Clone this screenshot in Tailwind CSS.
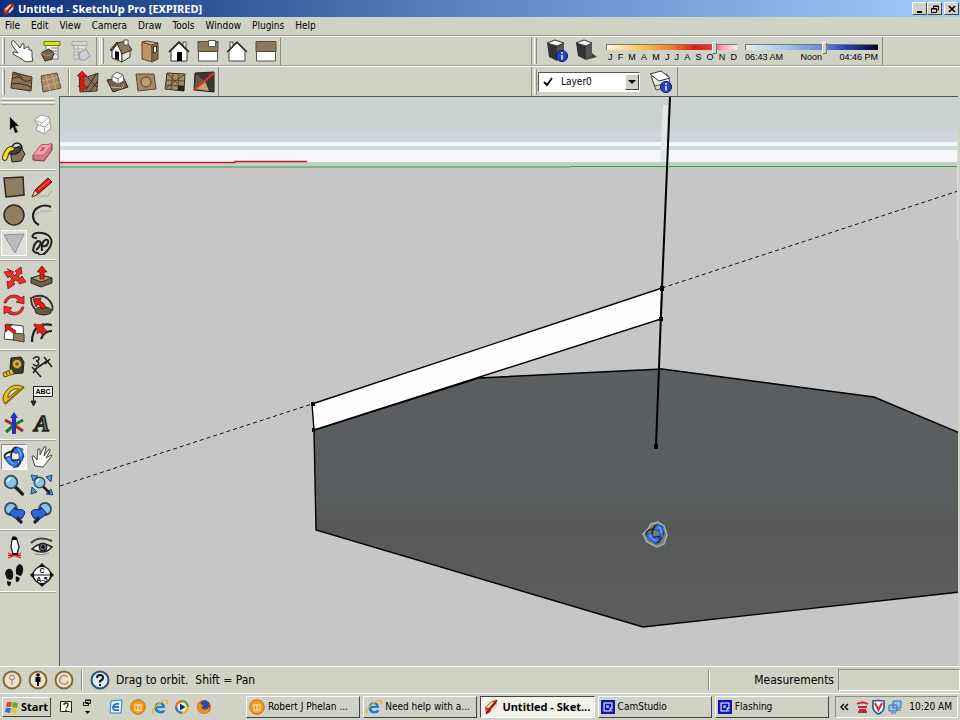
<!DOCTYPE html>
<html lang="en">
<head>
    <meta charset="UTF-8">
    <meta name="viewport" content="width=device-width, initial-scale=1.0">
    <script src="https://cdn.jsdelivr.net/npm/@tailwindcss/browser@4"></script>
    <title>Untitled - SketchUp Pro [EXPIRED]</title>
</head>
<body class="flex h-screen flex-col overflow-hidden bg-[#d1d2c6] text-[10px] leading-4 text-black font-['DejaVu_Sans_Condensed','DejaVu_Sans',sans-serif]">
    <!-- shared icons -->
    <svg class="hidden" aria-hidden="true">
        <symbol id="sketchup" viewBox="0 0 16 16">
            <path d="M2 8 9 2l5-1-1 7-7 6-3 1z" fill="#c8452c"/>
            <path d="M3 8 9 3l2 0-5 6zM8 10l5-5 0 3-5 5z" fill="#f7d9c8"/>
            <path d="M3 15 14 1" stroke="#6b2015" stroke-width="1.3"/>
        </symbol>
        <symbol id="ie" viewBox="0 0 16 16">
            <path d="M13 9H5.500q.4 3 3 3 1.600 0 2.400-1.300L13.500 12Q11.800 14.500 8.300 14.500 2.500 14 2.500 8.500 3 3.200 8.200 3q5 .4 4.800 6zM5.600 7H10q-.3-2-2.100-2T5.600 7z" fill="#1c7fd6"/>
            <path d="M1 14.500Q-.5 11 6 5.500 13-.2 15 1.500q1 1.200-.6 4" fill="none" stroke="#e8b21c" stroke-width="1.400"/>
        </symbol>
        <symbol id="orange" viewBox="0 0 16 16">
            <circle cx="8" cy="8" r="7.300" fill="#f39a1e" stroke="#c96f0c"/>
            <path d="M4 6h8M5 6v5M8 6v5M11 6v5M4.500 11.500h7" stroke="#fbd9a0" stroke-width="1.400" fill="none"/>
        </symbol>
        <symbol id="cam" viewBox="0 0 16 16">
            <rect width="16" height="16" fill="#1414b4"/>
            <path d="M3.500 3.500h9v6h-2v3h-7z" fill="none" stroke="#fff" stroke-width="1.200"/>
            <path d="M6 6h3v3H6zM11 11h2v2h-2z" fill="#9fb4ff"/>
        </symbol>
        <symbol id="orbit" viewBox="0 0 24 24">
            <ellipse cx="12" cy="11" rx="9.500" ry="4.500" fill="none" stroke="#222" stroke-width="1.800"/>
            <ellipse cx="14" cy="12" rx="5" ry="9.500" fill="none" stroke="#222" stroke-width="1.800"/>
            <path d="m11 6 4-4 6 2-1 2q3 5 0 10l-3-1q1-5-1-8l-2 2z" fill="#2f78e0" stroke="#123c8c" stroke-width=".7"/>
            <path d="m2 13 6-2 3 4-2 0q2 2 4 1l1-2 3 5-5 4-1-2q-5-1-7-6z" fill="#2f78e0" stroke="#123c8c" stroke-width=".7"/>
            <path d="M16 4q3 2 3 7M6 13q2 4 6 6" fill="none" stroke="#9cc4f8"/>
        </symbol>
        <symbol id="info" viewBox="0 0 12 12">
            <circle cx="6" cy="6" r="5.600" fill="#2743c0" stroke="#0d1c70"/>
            <path d="M6 5v4.500M6 2v1.700" stroke="#fff" stroke-width="1.500"/>
        </symbol>
        <symbol id="lens" viewBox="0 0 24 24">
            <path d="m13.500 14 7 7" stroke="#222" stroke-width="3.200" stroke-linecap="round"/>
            <circle cx="9" cy="9" r="6.300" fill="#8fc3e6" stroke="#31505f" stroke-width="1.800"/>
            <path d="M5.500 9Q6 5.500 9 5.200" stroke="#e4f4fd" stroke-width="1.600" fill="none"/>
        </symbol>
    </svg>

    <!-- title bar -->
    <header class="flex h-[17px] shrink-0 items-center gap-0.5 bg-linear-to-r from-[#0f2f78] via-[#5f86c4] to-[#a3cdfb] pr-px pl-0.5">
        <svg class="size-[14px]"><use href="#sketchup"/></svg>
        <h1 class="flex-1 text-[11px] font-bold text-white font-['Noto_Sans',sans-serif]">Untitled - SketchUp Pro [EXPIRED]</h1>
        <div class="flex text-black">
            <button aria-label="Minimize" class="grid h-[13px] w-[15px] place-items-center border border-t-white border-r-[#444] border-b-[#444] border-l-white bg-[#d1d2c6]"><svg class="h-2 w-2" viewBox="0 0 8 8"><path d="M1 6h5v2H1z"/></svg></button>
            <button aria-label="Restore" class="grid h-[13px] w-[15px] place-items-center border border-t-white border-r-[#444] border-b-[#444] border-l-white bg-[#d1d2c6]"><svg class="h-2 w-2" viewBox="0 0 8 8"><path d="M2.500 3V1h5v4H6M.5 3.500h5v4h-5zM.5 4h5M2.500 1.500h5" fill="none" stroke="#000"/></svg></button>
            <button aria-label="Close" class="ml-0.5 grid h-[13px] w-[15px] place-items-center border border-t-white border-r-[#444] border-b-[#444] border-l-white bg-[#d1d2c6]"><svg class="h-2 w-2" viewBox="0 0 8 8"><path d="m1 1 6 6M7 1 1 7" stroke="#000" stroke-width="1.600"/></svg></button>
        </div>
    </header>

    <!-- menu -->
    <nav class="flex h-[19px] shrink-0 items-center gap-[11px] border-b border-[#9c9c92] pl-[5px]">
        <a href="#">File</a>
        <a href="#">Edit</a>
        <a href="#">View</a>
        <a href="#">Camera</a>
        <a href="#">Draw</a>
        <a href="#">Tools</a>
        <a href="#">Window</a>
        <a href="#">Plugins</a>
        <a href="#">Help</a>
    </nav>

    <!-- toolbars, first row -->
    <div class="flex h-[30px] shrink-0 border-t border-b border-t-white border-b-[#a2a298]">
        <div class="flex flex-1">
            <div class="flex items-center border-r border-[#8d8d84] pl-0.5">
                <i class="mr-0.5 h-[26px] w-[3px] border-r border-l border-l-white border-r-[#8d8d84]"></i>
                <button aria-label="Interact" class="grid w-[29px] place-items-center"><svg class="size-6" viewBox="0 0 24 24"><path d="M2 2q2-1 3 1l5 6 2-4q2-2 2 1l0 4 3-2q2-1 2 1l0 2q3-1 3 2l0 5 1 4-7 1-6-4-7-4q-1-2 2-2l3 1L4 9l-2-3q-1-3 0-4z" fill="#fff" stroke="#444"/></svg></button>
                <button aria-label="Component options" class="grid w-[29px] place-items-center"><svg class="size-6" viewBox="0 0 24 24"><path d="M7 5h12v15H7z" fill="#f4f4ee" stroke="#777"/><path d="M5 2.500h16v4H5z" fill="#d9e021" stroke="#777618"/><path d="M12 9h6M12 12h6M12 15h6" stroke="#777"/><path d="m2 14 8-4 5 4-2 6-7 2z" fill="#75624a" stroke="#30261b"/><path d="m2 14 6 3 7-3" fill="none" stroke="#b39b79"/></svg></button>
                <button aria-label="Component attributes" disabled class="grid w-[29px] place-items-center"><svg class="size-6" viewBox="0 0 24 24"><path d="M6 5h12v15H6z" fill="#e0e0da" stroke="#aaa"/><path d="M4 2.500h15v4H4z" fill="#d5d5cf" stroke="#aaa"/><path d="M6 10h10M6 13h10M6 16h10M10 7v13" stroke="#aaa"/><path d="m11 14 7-4 4 7-5 4h-5z" fill="#cccfd4" stroke="#999"/></svg></button>
                <i class="ml-0.5 h-[28px] w-1 border-r border-l border-l-[#8d8d84] border-r-white"></i>
                <i class="mr-0.5 ml-px h-[26px] w-[3px] border-r border-l border-l-white border-r-[#8d8d84]"></i>
                <button aria-label="Iso" class="grid w-[29px] place-items-center"><svg class="size-6" viewBox="0 0 24 24"><path d="m3 10 5-6 5 10v9l-10-4z" fill="#fff" stroke="#333"/><path d="m13 14 8-3v7l-8 5z" fill="#e4e4df" stroke="#333"/><path d="m8 4 9-2 6 9-10 4z" fill="#8a795d" stroke="#333"/><path d="m1 11 7-8 1 1-6 8z" fill="#5a4e3a" stroke="#333"/><path d="M15 1h4v5h-4z" fill="#fff" stroke="#555"/><path d="m6 12 4 1v8l-4-1z"/></svg></button>
                <button aria-label="Top" class="grid w-[29px] place-items-center"><svg class="size-6" viewBox="0 0 24 24"><path d="m4 3 10 3v17L4 20z" fill="#bc9365" stroke="#5d4529"/><path d="m4 3 5-1 11 2-6 2z" fill="#d8b88d" stroke="#5d4529"/><path d="M14 6l6-2v16l-6 3z" fill="#8a6c47" stroke="#5d4529"/><path d="m15.500 8 3-1v6l-3 1z" fill="#fff" stroke="#333"/></svg></button>
                <button aria-label="Front" class="grid w-[29px] place-items-center"><svg class="size-6" viewBox="0 0 24 24"><path d="M16 3h3v6h-3z" fill="#fff" stroke="#444"/><path d="M4 12 12 4l8 8v10H4z" fill="#fff" stroke="#333"/><path d="m2 13 10-10 10 10" fill="none" stroke="#3c352a" stroke-width="1.800"/><path d="M10 13h5v9h-5z"/></svg></button>
                <button aria-label="Right" class="grid w-[29px] place-items-center"><svg class="size-6" viewBox="0 0 24 24"><path d="M2.500 12h19v10h-19z" fill="#fff" stroke="#555"/><path d="M2 2.500h20v10H2z" fill="#8a795d" stroke="#5a4e3a"/><path d="M12.500 1.500h7v6h-7z" fill="#fff" stroke="#555"/></svg></button>
                <button aria-label="Back" class="grid w-[29px] place-items-center"><svg class="size-6" viewBox="0 0 24 24"><path d="M5 3h3v6H5z" fill="#fff" stroke="#444"/><path d="M4 12 12 4l8 8v10H4z" fill="#fff" stroke="#444"/><path d="m2 13 10-10 10 10" fill="none" stroke="#3c352a" stroke-width="1.500"/></svg></button>
                <button aria-label="Left" class="grid w-[29px] place-items-center"><svg class="size-6" viewBox="0 0 24 24"><path d="M2.500 12h19v10h-19z" fill="#fff" stroke="#555"/><path d="M2 2.500h20v10H2z" fill="#8a795d" stroke="#5a4e3a"/></svg></button>
            </div>
        </div>
        <div class="w-[429px]">
            <div class="flex h-full w-[352px] items-center border-r border-l border-r-[#8d8d84] border-l-[#8d8d84]">
                <i class="mr-[5px] ml-0.5 h-[26px] w-[3px] border-r border-l border-l-white border-r-[#8d8d84]"></i>
                <button aria-label="Shadow settings" class="grid w-[29px] place-items-center"><svg class="size-6" viewBox="0 0 24 24"><path d="m2 4 10 3v15L4 18z" fill="#333"/><path d="m12 7 7-3v14l-7 4z" fill="#555"/><path d="m2 4 8-3 9 3-7 3z" fill="#f6f6f6" stroke="#333"/><use href="#info" x="11" y="11" width="12" height="12"/></svg></button>
                <button aria-label="Display shadows" class="grid w-[29px] place-items-center"><svg class="size-6" viewBox="0 0 24 24"><path d="m12 21 11-3-5-4z" fill="#444"/><path d="m2 4 10 3v14L4 17z" fill="#333"/><path d="m12 7 6-3v13l-6 4z" fill="#555"/><path d="m2 4 8-3 8 3-6 3z" fill="#f6f6f6" stroke="#333"/></svg></button>
                <div class="ml-1.5 flex w-[131px] flex-col text-[9px] leading-[9px] font-['Liberation_Sans',sans-serif]">
                    <input type="range" aria-label="Month" min="0" max="100" value="84" class="h-3 w-full appearance-none border-y-3 border-transparent bg-[linear-gradient(to_right,#fff8e8,#f5c648_28%,#ef7a2c_50%,#dc1c18_68%,#e8343a_80%,#f7aeb8_90%,#fbe6ea)] bg-clip-padding shadow-[inset_1px_1px_0_#777] [&::-webkit-slider-thumb]:h-3 [&::-webkit-slider-thumb]:w-[5px] [&::-webkit-slider-thumb]:translate-y-px [&::-webkit-slider-thumb]:appearance-none [&::-webkit-slider-thumb]:border [&::-webkit-slider-thumb]:border-[#777] [&::-webkit-slider-thumb]:border-t-white [&::-webkit-slider-thumb]:border-l-white [&::-webkit-slider-thumb]:bg-[#d1d2c6]">
                    <div class="flex justify-between pl-0.5"><span>J</span><span>F</span><span>M</span><span>A</span><span>M</span><span>J</span><span>J</span><span>A</span><span>S</span><span>O</span><span>N</span><span>D</span></div>
                </div>
                <div class="ml-2 flex w-[133px] flex-col text-[9px] leading-[9px] font-['Liberation_Sans',sans-serif]">
                    <input type="range" aria-label="Time" min="0" max="100" value="60" class="h-3 w-full appearance-none border-y-3 border-transparent bg-[linear-gradient(to_right,#e4f2f4,#a8c4e4_30%,#5c84d8_60%,#2c44b8_75%,#080818)] bg-clip-padding shadow-[inset_1px_1px_0_#777] [&::-webkit-slider-thumb]:h-3 [&::-webkit-slider-thumb]:w-[5px] [&::-webkit-slider-thumb]:translate-y-px [&::-webkit-slider-thumb]:appearance-none [&::-webkit-slider-thumb]:border [&::-webkit-slider-thumb]:border-[#777] [&::-webkit-slider-thumb]:border-t-white [&::-webkit-slider-thumb]:border-l-white [&::-webkit-slider-thumb]:bg-[#d1d2c6]">
                    <div class="flex justify-between"><span>06:43 AM</span><span>Noon</span><span>04:46 PM</span></div>
                </div>
            </div>
        </div>
    </div>

    <!-- toolbars, second row -->
    <div class="flex h-[30px] shrink-0 border-t border-t-white">
        <div class="flex flex-1">
            <div class="flex items-center border-r border-[#8d8d84] pl-0.5">
                <i class="mr-0.5 h-[26px] w-[3px] border-r border-l border-l-white border-r-[#8d8d84]"></i>
                <button aria-label="From contours" class="grid w-[29px] place-items-center"><svg class="size-6" viewBox="0 0 24 24"><path d="m3 2 7 2 12 3-1 14-20-3z" fill="#8a7458" stroke="#3d3020"/><path d="M2 9q6-4 10 0t9 1M2 14q8-2 19 3M4 4q8 1 8 5" fill="none" stroke="#3a2d1f"/></svg></button>
                <button aria-label="From scratch" class="grid w-[29px] place-items-center"><svg class="size-6" viewBox="0 0 24 24"><path d="m2 6 16-3 4 15-18 4z" fill="#a18a65" stroke="#5e4c33"/><path d="m7 5 4 16M13 4l4 15M3 11l16-4M4 17l17-5" stroke="#c7b08a" fill="none"/></svg></button>
                <i class="mx-[3px] h-[26px] w-0.5 border-l border-r border-l-[#8d8d84] border-r-white"></i>
                <button aria-label="Smoove" class="grid w-[29px] place-items-center"><svg class="size-6" viewBox="0 0 24 24"><path d="m3 4 8 3 11-4-1 18-17 1z" fill="#8a7458" stroke="#3d3020"/><path d="M10 20 20 4M14 21l7-9M12 8l9 9" stroke="#30261b"/><path d="m6 1 5 5H8v10h3l-4 5-5-5h2V6H1z" fill="#e01818" stroke="#8c0808" stroke-width=".6"/></svg></button>
                <button aria-label="Stamp" class="grid w-[29px] place-items-center"><svg class="size-6" viewBox="0 0 24 24"><path d="m2 10 16-3 5 10-15 5z" fill="#74614a" stroke="#30261b"/><path d="m6 17 11 1 2-4" fill="none" stroke="#cbb58f"/><path d="m7 6 5-4 6 3 1 6-6 3-6-3z" fill="#fff" stroke="#555"/><path d="m7 6 6 3 5-4M13 9v5" fill="none" stroke="#777"/></svg></button>
                <button aria-label="Drape" class="grid w-[29px] place-items-center"><svg class="size-6" viewBox="0 0 24 24"><path d="m2 4 18 0 2 15-18 2z" fill="#a18a65" stroke="#5e4c33"/><circle cx="12" cy="12" r="5" fill="#b59e76" stroke="#55442e"/></svg></button>
                <button aria-label="Add detail" class="grid w-[29px] place-items-center"><svg class="size-6" viewBox="0 0 24 24"><path d="m4 3 18 1-1 17-19-2z" fill="#a18a65" stroke="#3d3020"/><path d="m10 4-2 15M16 4l-1 16M3 10l18 1M3 15l18 1M4 3l17 17M22 4 3 18" stroke="#5a4832"/><path d="M15 16h6v5h-6z" fill="#222"/></svg></button>
                <button aria-label="Flip edge" class="grid w-[29px] place-items-center"><svg class="size-6" viewBox="0 0 24 24"><path d="m3 3 19-1 0 20-20-2z" fill="#3c3733" stroke="#222"/><path d="m4 4 9 8-10 8z" fill="#6c5848"/><path d="m13 11 4 10-14-2z" fill="#c3a478"/><path d="M2 20 22 3" stroke="#e03020" stroke-width="2"/></svg></button>
            </div>
        </div>
        <div class="w-[429px]">
            <div class="flex h-full w-[147px] items-center border-r border-l border-r-[#8d8d84] border-l-[#8d8d84]">
                <i class="mr-px ml-0.5 h-[26px] w-[3px] border-r border-l border-l-white border-r-[#8d8d84]"></i>
                <div class="relative h-5 w-[102px] border border-t-[#555] border-r-white border-b-white border-l-[#555] bg-white">
                    <select aria-label="Layer" class="h-full w-full appearance-none pl-[22px] text-[10px] leading-4"><option>Layer0</option></select>
                    <svg class="pointer-events-none absolute top-1 left-1 size-[10px]" viewBox="0 0 10 10"><path d="m1 5 3 3 5-7" fill="none" stroke="#000" stroke-width="1.800"/></svg>
                    <span class="pointer-events-none absolute top-px right-0 grid h-4 w-[14px] place-items-center border border-t-white border-r-[#444] border-b-[#444] border-l-white bg-[#d1d2c6]"><svg class="h-1 w-2" viewBox="0 0 8 4"><path d="M0 0h8L4 4z"/></svg></span>
                </div>
                <button aria-label="Layer manager" class="ml-1.5 grid w-[29px] place-items-center"><svg class="size-6" viewBox="0 0 24 24"><path d="m3 9 4 11 14-3-3-10z" fill="#d9d9d0" stroke="#555"/><path d="m2 6 4 10 15-4-3-8z" fill="#ecece6" stroke="#555"/><path d="m1 4 11-3 9 7-11 3z" fill="#fff" stroke="#333"/><use href="#info" x="11" y="11" width="12" height="12"/></svg></button>
            </div>
        </div>
    </div>

    <main class="flex min-h-0 flex-1 pr-0.5">
        <!-- large tool set -->
        <aside class="w-[59px] shrink-0 pt-0.5 pr-[3px]">
            <div class="flex h-[11px] flex-col gap-px px-px">
                <i class="h-[3px] border-t border-b border-t-white border-b-[#a2a298]"></i>
                <i class="h-[3px] border-t border-b border-t-white border-b-[#a2a298]"></i>
            </div>
            <div class="grid auto-rows-[28px] grid-cols-2 place-items-center border-b border-white py-0.5">
                <button aria-label="Select"><svg class="size-6" viewBox="0 0 24 24"><path d="m8 4 9 9-4 0 3 6-3 1-2-6-3 3z" fill="#000" stroke="#777" stroke-width=".6"/></svg></button>
                <button aria-label="Make component"><svg class="size-6" viewBox="0 0 24 24"><path d="m4 7 7-5 8 2 2 11-7 6-8-4 2-6z" fill="#f8f8f6" stroke="#999"/><path d="m4 7 8 3 7-6M12 10l-3 3M8 12l7 2 5-5M15 14l-1 7" fill="none" stroke="#aaa"/></svg></button>
                <button aria-label="Paint bucket"><svg class="size-6" viewBox="0 0 24 24"><ellipse cx="15" cy="7" rx="5" ry="5" fill="none" stroke="#222" stroke-width="1.500"/><path d="M8 9 18 5l5 8-4 7-9 1z" fill="#83765d" stroke="#222"/><ellipse cx="13" cy="10" rx="6" ry="3" transform="rotate(-20 13 10)" fill="#444" stroke="#111"/><path d="M13 7Q7 3 3 10T1 19q4 2 5-4t5-5z" fill="#f2dc20" stroke="#222"/></svg></button>
                <button aria-label="Eraser"><svg class="size-6" viewBox="0 0 24 24"><path d="m3 14 8-10 11-1 0 6-8 11-11-1z" fill="#d9758b" stroke="#8d3347"/><path d="m3 14 8-10 11-1-8 11z" fill="#f3a3b2" stroke="#b75468" stroke-width=".6"/><path d="m10 10 4-2M11 7l4 0" stroke="#a03048"/></svg></button>
            </div>
            <div class="grid auto-rows-[28px] grid-cols-2 place-items-center border-t border-b border-t-[#a2a298] border-b-white py-0.5">
                <button aria-label="Rectangle"><svg class="size-6" viewBox="0 0 24 24"><path d="m2 3 19-1 1 18-18 2z" fill="#8f7f62" stroke="#2d2820" stroke-width="1.500"/></svg></button>
                <button aria-label="Line"><svg class="size-6" viewBox="0 0 24 24"><path d="M5 21h13l4-6" fill="none" stroke="#aaa"/><path d="m2 22 3-7 13-12 4 4L8 19z" fill="#d41c1c" stroke="#5e0c0c"/><path d="m2 22 3-7 3 4z" fill="#e9d0a0" stroke="#333" stroke-width=".7"/><path d="m8 15 12-10" stroke="#ff7a6a"/></svg></button>
                <button aria-label="Circle"><svg class="size-6" viewBox="0 0 24 24"><circle cx="12" cy="12" r="10" fill="#8f7f62" stroke="#2d2820" stroke-width="1.500"/></svg></button>
                <button aria-label="Arc"><svg class="size-6" viewBox="0 0 24 24"><path d="M21 4Q15 1 9 4T3 13t6 9" fill="none" stroke="#222" stroke-width="2.200"/><path d="m5 12 7-4 10 0" fill="none" stroke="#aaa"/></svg></button>
                <button aria-label="Polygon" class="border border-white bg-[#dedfd8]"><svg class="size-6" viewBox="0 0 24 24"><path d="m2 4 20-1-9 19z" fill="#b9bbbd" stroke="#8d8f91"/></svg></button>
                <button aria-label="Freehand"><svg class="size-6" viewBox="0 0 24 24"><path d="M7 7Q1 7 3 4T12 2t9 6-4 12-9 2q-4 0-5-3 1-7 5-9 4 0 2 4t-4 5M12 20q-1-8 3-11 4-1 3 3t-6 3" fill="none" stroke="#222" stroke-width="2"/></svg></button>
            </div>
            <div class="grid auto-rows-[28px] grid-cols-2 place-items-center border-t border-b border-t-[#a2a298] border-b-white py-0.5">
                <button aria-label="Move"><svg class="size-6" viewBox="0 0 24 24"><path d="m4 3 7 3-2 1 3 3 2-4-2-1 6-4 1 7-2-1-2 4 3 1 1-2 4 6-7 2 0-2-4-2-2 3 2 1-7 5-1-8 2 1 3-3-3-3-1 2-4-6 7-1z" transform="translate(1 1)" fill="#e83030" stroke="#8c1010" stroke-width=".8"/></svg></button>
                <button aria-label="Push/Pull"><svg class="size-6" viewBox="0 0 24 24"><path d="m1 13 10-3 11 3v5l-11 4-10-4z" fill="#6f6149" stroke="#332b1d"/><path d="m1 13 10-3 11 3-11 4z" fill="#ab9a77" stroke="#332b1d"/><path d="m12 1 5 6h-3v7h-4V7H7z" fill="#e01c1c" stroke="#7c0c0c" stroke-width=".8"/></svg></button>
                <button aria-label="Rotate"><svg class="size-6" viewBox="0 0 24 24"><path d="M2 10Q4 2 12 2q5 0 7 3l3-2 0 8-8-2 3-2q-4-4-9-2-3 2-4 5z" fill="#e83030" stroke="#8c1010" stroke-width=".8"/><path d="M22 14q-2 8-10 8-5 0-7-3l-3 2 0-8 8 2-3 2q4 4 9 2 3-2 4-5z" fill="#e83030" stroke="#8c1010" stroke-width=".8"/></svg></button>
                <button aria-label="Follow me"><svg class="size-6" viewBox="0 0 24 24"><path d="M5 16Q1 12 1 5 12 0 18 6t4 12" fill="none" stroke="#333" stroke-width="1.800"/><path d="M5 17q1-3 8-3t8 3l0 3q-7 4-15 0z" fill="#6a563e" stroke="#2d2820"/><path d="m3 6 8-1-1 3q5 2 6 7l-5 1q0-3-3-5l-2 3z" fill="#e01c1c" stroke="#7c0c0c" stroke-width=".8"/></svg></button>
                <button aria-label="Scale"><svg class="size-6" viewBox="0 0 24 24"><path d="m4 3 17 2 1 15-20-2z" fill="#fff" stroke="#444"/><path d="m12 12 10 1v8l-11-2z" fill="#8f7f62" stroke="#444"/><path d="m3 4 7 0-2 2 6 4-2 3-6-5-2 3z" fill="#e01c1c" stroke="#7c0c0c" stroke-width=".8"/></svg></button>
                <button aria-label="Offset"><svg class="size-6" viewBox="0 0 24 24"><path d="M22 4Q14 2 8 6T2 21M22 10q-8 0-11 8" fill="none" stroke="#222" stroke-width="2.200"/><path d="m4 3 7 1 2-2 1 5 3 3-4 1 0 4-3-4-3 2 0-5-3-3z" fill="#e01c1c" stroke="#7c0c0c" stroke-width=".6"/></svg></button>
            </div>
            <div class="grid auto-rows-[28px] grid-cols-2 place-items-center border-t border-b border-t-[#a2a298] border-b-white py-0.5">
                <button aria-label="Tape measure"><svg class="size-6" viewBox="0 0 24 24"><path d="m9 3 10-1 3 5-1 11-11 1-2-6z" fill="#3b3930" stroke="#222"/><circle cx="15" cy="9" r="4.500" fill="#d8b72c" stroke="#6a5810"/><circle cx="15" cy="9" r="1.800" fill="#555"/><path d="m10 14-9 4 1 4 10-3z" fill="#e5c62f" stroke="#5d4d0b"/><path d="m4 17 1 3M7 16l1 3" stroke="#333"/></svg></button>
                <button aria-label="Dimension"><svg class="size-6" viewBox="0 0 24 24"><path d="M3 4q4-4 6-1 0 3-3 3 4 1 2 4-2 2-5-1" fill="none" stroke="#222" stroke-width="1.600"/><path d="m4 15 13-9M2 12l9 10M14 2l8 10M3 18l4-5M15 9l5-5" fill="none" stroke="#222" stroke-width="1.600"/></svg></button>
                <button aria-label="Protractor"><svg class="size-6" viewBox="0 0 24 24"><path d="M22 4Q12-1 5 7T3 21z" fill="#e6bf28" stroke="#6a5208"/><path d="M17 6Q11 5 8 9T6 15z" fill="#d1d2c6" stroke="#6a5208"/><path d="m3 21 19-17" stroke="#8c6d0c" stroke-width="2"/></svg></button>
                <button aria-label="Text"><svg class="size-6" viewBox="0 0 24 24"><path d="M3.500 3.500h19v10h-19z" fill="#f4f4ee" stroke="#222"/><path d="M3.500 13v8M1 18l2.500 5L6 18z" fill="#222" stroke="#222"/><text x="13" y="11" text-anchor="middle" font-family="Liberation Sans" font-weight="bold" font-size="7">ABC</text></svg></button>
                <button aria-label="Axes"><svg class="size-6" viewBox="0 0 24 24"><path d="m12 14 9 6M12 14 3 9" stroke="#b02020" stroke-width="3"/><path d="m12 14-8 7M12 14l9-5" stroke="#1c7c2c" stroke-width="3"/><path d="m12 1 4 6h-2v16h-4V7H8z" fill="#1c34b8"/></svg></button>
                <button aria-label="3D text"><svg class="size-6" viewBox="0 0 24 24"><text x="12" y="20" text-anchor="middle" font-family="Liberation Serif" font-weight="bold" font-style="italic" font-size="23" fill="#6f6a5c" stroke="#222" stroke-width="1.400">A</text></svg></button>
            </div>
            <div class="grid auto-rows-[28px] grid-cols-2 place-items-center border-t border-b border-t-[#a2a298] border-b-white py-0.5">
                <button aria-label="Orbit" class="border border-t-[#8d8d84] border-r-white border-b-white border-l-[#8d8d84] bg-[#f1f1ec]"><svg class="size-6"><use href="#orbit"/></svg></button>
                <button aria-label="Pan"><svg class="size-6" viewBox="0 0 24 24"><path d="m5 21-2-6-1-4 2 0 3 4L8 4q2-1 2 1l0 5 4-8q2-1 2 1l-2 8 5-7q2 0 1 2l-4 7 5-3q2 0 0 2l-8 10z" fill="#fff" stroke="#444"/></svg></button>
                <button aria-label="Zoom"><svg class="size-6"><use href="#lens"/></svg></button>
                <button aria-label="Zoom extents"><svg class="size-6" viewBox="0 0 24 24"><path d="M1 2l7 1-5 5zM22 2l-1 7-5-5zM1 21l1-7 5 5zM23 22l-7-1 5-5z" fill="#5b8fd0" stroke="#1d4b8c"/><use href="#lens" x="2" y="2" width="20" height="20"/></svg></button>
                <button aria-label="Previous"><svg class="size-6" viewBox="0 0 24 24"><circle cx="9" cy="8" r="6" fill="#8fc3e6" stroke="#31505f" stroke-width="1.800"/><path d="m14 16 5 5" stroke="#222" stroke-width="3.200" stroke-linecap="round"/><path d="m7 13 6-7 1 3q6-2 9 2-1 5-4 7-1-3-4-2l1 3z" fill="#2a66d4" stroke="#10255c"/></svg></button>
                <button aria-label="Next"><svg class="size-6" viewBox="0 0 24 24"><circle cx="15" cy="8" r="6" fill="#8fc3e6" stroke="#31505f" stroke-width="1.800"/><path d="m10 16-5 5" stroke="#222" stroke-width="3.200" stroke-linecap="round"/><path d="m17 13-6-7-1 3q-6-2-9 2 1 5 4 7 1-3 4-2l-1 3z" fill="#2a66d4" stroke="#10255c"/></svg></button>
            </div>
            <div class="grid auto-rows-[28px] grid-cols-2 place-items-center border-t border-b border-t-[#a2a298] border-b-white py-0.5">
                <button aria-label="Position camera"><svg class="size-6" viewBox="0 0 24 24"><path d="m6 18 13 5M6 23l13-5M6 20.500h13" stroke="#d42020" stroke-width="1.300"/><path d="M12 2q3 0 3 3l2 7-2 7h-4l-2-7 1-7q0-3 2-3z" fill="#fff" stroke="#222" stroke-width="1.300"/><path d="M10 5V3q3-3 5 2zM10 18h6v2h-6z"/></svg></button>
                <button aria-label="Look around"><svg class="size-6" viewBox="0 0 24 24"><path d="M1 8Q9 0 22 6" fill="none" stroke="#444" stroke-width="2"/><path d="M2 14q9-9 20-2-8 9-20 2z" fill="#f4f4f0" stroke="#222" stroke-width="1.500"/><circle cx="13" cy="12" r="4" fill="#4c5a66" stroke="#111"/><circle cx="13" cy="12" r="1.500"/><path d="M5 19q8 2 14-1" fill="none" stroke="#888"/></svg></button>
                <button aria-label="Walk"><svg class="size-6" viewBox="0 0 24 24"><path d="M6 6q4-1 5 4t-2 7l-4-1Q1 8 6 6zM5 18l4 1q0 4-2 4t-2-5zM18 1q4 2 3 7t-3 5l-4-2q-1-9 4-10zM14 13l4 2q-1 4-3 4t-1-6z" fill="#111"/></svg></button>
                <button aria-label="Section plane"><svg class="size-6" viewBox="0 0 24 24"><path d="m12 0 12 12-12 12L0 12z" fill="#111"/><circle cx="12" cy="12" r="8.700" fill="#fff" stroke="#111" stroke-width="1.300"/><path d="M3 12h18" stroke="#111"/><g font-family="Liberation Sans" font-weight="bold" font-size="7" text-anchor="middle"><text x="12" y="10">C</text><text x="12" y="19">A-5</text></g></svg></button>
            </div>
            <div class="border-t border-[#a2a298]"></div>
        </aside>

        <!-- model view -->
        <section class="min-w-0 flex-1 overflow-hidden border-t border-l border-[#555] bg-[#c6c6c6]">
            <svg class="h-full w-full" viewBox="60 97 898 569" preserveAspectRatio="xMidYMid slice" aria-label="Model view">
                <defs>
                    <linearGradient id="face" x1="0" y1="0" x2="0" y2="1">
                        <stop offset="0" stop-color="#5b5f62"/>
                        <stop offset=".45" stop-color="#5a5d60"/>
                        <stop offset=".6" stop-color="#575958"/>
                        <stop offset="1" stop-color="#5c5d5c"/>
                    </linearGradient>
                    <linearGradient id="sky" x1="0" y1="0" x2="0" y2="1">
                        <stop offset="0" stop-color="#c7d3cf"/>
                        <stop offset=".65" stop-color="#c8d3d0"/>
                        <stop offset=".8" stop-color="#d0d4de"/>
                        <stop offset="1" stop-color="#d0d6dc"/>
                    </linearGradient>
                </defs>
                <rect x="60" y="97" width="898" height="45" fill="url(#sky)"/>
                <rect x="60" y="142" width="898" height="4" fill="#f2f9f9"/>
                <rect x="60" y="146" width="898" height="4" fill="#cddcd8"/>
                <rect x="60" y="150" width="898" height="12" fill="#f4f6fb"/>
                <path d="m663 105 5 0-3 57-5 0z" fill="#e2e9ec"/>
                <rect x="60" y="162" width="898" height="4" fill="#c4d2c2"/>
                <path d="M60 167H570V166.500H958" fill="none" stroke="#3d9a4e"/>
                <path d="M60 162.500H235V161.500H307" fill="none" stroke="#c01838" stroke-width="1.300"/>
                <path d="M60 486 312 404M662 288 958 191" stroke="#111" stroke-dasharray="4 3"/>
                <path d="M314 430 479 378 662 369 874 397 960 433V592L643 627 316 530z" fill="url(#face)" stroke="#000" stroke-width="1.400"/>
                <path d="M312 404 662 288 661 319 314 430z" fill="#fffdfd" stroke="#000" stroke-width="1.400"/>
                <path d="M670 97 662 288 656 446" fill="none" stroke="#000" stroke-width="2"/>
                <path d="M660 286h4v5h-4zM659 317h4v4h-4zM311 402h4v4h-4zM312 428h3v4h-3zM654 444h4v5h-4z"/>
                <path d="M957.500 140V240" stroke="#e0e0e0"/>
                <path d="M643 534l5-5 3-5 7-2 6 4 3 9-3 9-7 3-10-5z" fill="#777d80" stroke="#a9b0b2" stroke-width="1.500"/>
                <use href="#orbit" x="644" y="523" width="22" height="22"/>
            </svg>
        </section>
    </main>

    <!-- status bar -->
    <div class="flex h-[27px] shrink-0 items-center border-t border-white pl-0.5 text-[12px]">
        <div class="flex gap-[6px]">
            <button aria-label="Geo-location"><svg class="size-5" viewBox="0 0 20 20"><circle cx="10" cy="10" r="8.500" fill="#eee3cf" stroke="#8a6738" stroke-width="2"/><circle cx="10" cy="7.500" r="2.500" fill="#f3d3c8" stroke="#a87868"/><path d="M10 10v5" stroke="#a87868"/></svg></button>
            <button aria-label="Credits"><svg class="size-5" viewBox="0 0 20 20"><circle cx="10" cy="10" r="8.500" fill="#eee3cf" stroke="#8a6738" stroke-width="2"/><circle cx="10" cy="5" r="1.800"/><path d="M7.500 7h5v5H11v4H9v-4H7.500z"/></svg></button>
            <button aria-label="Claim credit"><svg class="size-5" viewBox="0 0 20 20"><circle cx="10" cy="10" r="8.500" fill="#eee3cf" stroke="#8a6738" stroke-width="2"/><path d="M13.500 7Q10 3.500 7 7t0 6 6.500 0v-2" fill="none" stroke="#a88a60" stroke-width="1.500"/></svg></button>
        </div>
        <i class="mx-[7px] h-5 w-0.5 border-r border-l border-r-white border-l-[#8d8d84]"></i>
        <button aria-label="Help"><svg class="size-5" viewBox="0 0 20 20"><circle cx="10" cy="10" r="8.500" fill="#d8e8f4" stroke="#31506e" stroke-width="2"/><path d="M7 8q0-3 3-3t3 2.500-3 3.500v1.500M10 14v2" fill="none" stroke="#111" stroke-width="2"/></svg></button>
        <p class="ml-1.5 flex-1 whitespace-pre">Drag to orbit.  Shift = Pan</p>
        <i class="h-5 w-0.5 border-r border-l border-r-white border-l-[#8d8d84]"></i>
        <label for="vcb" class="w-[128px] pr-1 text-right">Measurements</label>
        <input id="vcb" type="text" class="h-[22px] w-[122px] border border-t-[#8d8d84] border-r-white border-b-white border-l-[#8d8d84]">
    </div>

    <!-- windows taskbar -->
    <footer class="flex h-[27px] shrink-0 items-center border-t border-white px-0.5 pb-px">
        <button class="flex h-5 w-[49px] items-center gap-0.5 border border-t-white border-r-[#444] border-b-[#444] border-l-white px-0.5 text-[11px] font-bold font-['Noto_Sans',sans-serif]">
            <svg class="size-[14px] shrink-0" viewBox="0 0 14 14"><path d="m2 2 5 0-1 5-5 0z" fill="#e2482c"/><path d="m8 2 5 1-1 5-5-1z" fill="#5fae2c"/><path d="m1 8 5 0-1 5-5-1z" fill="#2f6ed6"/><path d="m7 8 5 1-1 5-5-1z" fill="#f0c020"/></svg>Start
        </button>
        <button aria-label="Language help" class="ml-2"><svg class="size-[14px]" viewBox="0 0 14 14"><path d="M1.500 1.500h11v11l-2-1h-9z" fill="#fbfbe4" stroke="#222"/><path d="M5 5q0-2 2-2t2 2-2 3M7 9.500V11" fill="none" stroke="#222" stroke-width="1.300"/></svg></button>
        <button aria-label="Language options" class="ml-[9px]"><svg class="h-4 w-[10px]" viewBox="0 0 10 16"><path d="M3.500 1.500h5v3h-5zM1.500 3.500h5v3h-5zM3 1h6" fill="none" stroke="#111"/><path d="M3 12h5l-2.500 3z"/></svg></button>
        <div class="ml-4 flex gap-[6px]">
            <button aria-label="Outlook Express"><svg class="size-4" viewBox="0 0 16 16"><path d="m3 2 11-1-1 13-11 0z" fill="#e9f4fc" stroke="#2d7cc0"/><path d="M11 5Q6 4 5 8t6 3M5 8h6" fill="none" stroke="#2076c4" stroke-width="1.800"/></svg></button>
            <button aria-label="Real estate"><svg class="size-4"><use href="#orange"/></svg></button>
            <button aria-label="Internet Explorer"><svg class="size-4"><use href="#ie"/></svg></button>
            <button aria-label="Media Player"><svg class="size-4" viewBox="0 0 16 16"><path d="M8 1a7 7 0 0 1 7 7H8z" fill="#58a830"/><path d="M15 8a7 7 0 0 1-7 7V8z" fill="#e8b820"/><path d="M8 15a7 7 0 0 1-7-7h7z" fill="#3674c8"/><path d="M1 8a7 7 0 0 1 7-7v7z" fill="#e06a28"/><circle cx="8" cy="8" r="4.600" fill="#f2f6fa"/><path d="m6 4.500 5.500 3.500L6 11.500z" fill="#1c2c50"/></svg></button>
            <button aria-label="Firefox"><svg class="size-4" viewBox="0 0 16 16"><circle cx="8" cy="8" r="7" fill="#d8581c"/><circle cx="9" cy="6" r="4.500" fill="#2c4ea0"/><path d="M1 4q4 0 6 3l-2 2q4 4 9-1-1 7-7 7T1 4z" fill="#ef8a24"/></svg></button>
        </div>
        <div class="ml-[34px] flex flex-1 gap-[3px]">
            <button class="flex h-[22px] min-w-0 flex-1 items-center gap-[3px] border border-t-white border-r-[#444] border-b-[#444] border-l-white px-0.5 whitespace-nowrap"><svg class="size-4 shrink-0"><use href="#orange"/></svg>Robert J Phelan ...</button>
            <button class="flex h-[22px] min-w-0 flex-1 items-center gap-[3px] border border-t-white border-r-[#444] border-b-[#444] border-l-white px-0.5 whitespace-nowrap"><svg class="size-4 shrink-0"><use href="#ie"/></svg>Need help with a...</button>
            <button class="flex h-[22px] min-w-0 flex-1 items-center gap-[3px] border border-t-[#444] border-r-white border-b-white border-l-[#444] bg-[#f1f1ea] px-0.5 text-[11px] font-bold whitespace-nowrap font-['Noto_Sans',sans-serif]"><svg class="size-4 shrink-0"><use href="#sketchup"/></svg>Untitled - Sket...</button>
            <button class="flex h-[22px] min-w-0 flex-1 items-center gap-[3px] border border-t-white border-r-[#444] border-b-[#444] border-l-white px-0.5 whitespace-nowrap"><svg class="size-[14px] shrink-0"><use href="#cam"/></svg>CamStudio</button>
            <button class="flex h-[22px] min-w-0 flex-1 items-center gap-[3px] border border-t-white border-r-[#444] border-b-[#444] border-l-white px-0.5 whitespace-nowrap"><svg class="size-[14px] shrink-0"><use href="#cam"/></svg>Flashing</button>
        </div>
        <div class="ml-[6px] flex h-[22px] w-[123px] items-center gap-[3px] border border-t-[#8d8d84] border-r-white border-b-white border-l-[#8d8d84] pr-[5px] pl-1">
            <button aria-label="Show hidden icons"><svg class="h-2 w-[9px]" viewBox="0 0 9 8"><path d="M4 1 1 4l3 3M8 1 5 4l3 3" fill="none" stroke="#000" stroke-width="1.400"/></svg></button>
            <svg class="ml-1 h-3 w-[13px]" viewBox="0 0 13 12"><path d="M1 3q5-3 11 0M2 6h9M3 9h7M2 11h9" fill="none" stroke="#b8283c" stroke-width="1.800"/></svg>
            <svg class="h-4 w-[13px]" viewBox="0 0 13 16"><path d="M1 2q5-1 11 0v7q-1 4-5.500 6Q2 13 1 9z" fill="#fff" stroke="#28508c" stroke-width="1.600"/><path d="m3 4 3.500 7L10 4" fill="none" stroke="#d42828" stroke-width="2"/></svg>
            <svg class="size-[14px]" viewBox="0 0 14 14"><path d="M5 1h8v7H5zM1 5h8v6H1z" fill="#8fc4ee" stroke="#3a6fa8"/><path d="M3 13h5M9 10h4" stroke="#3a6fa8"/></svg>
            <time class="flex-1 text-right whitespace-nowrap">10:20 AM</time>
        </div>
    </footer>
</body>
</html>
